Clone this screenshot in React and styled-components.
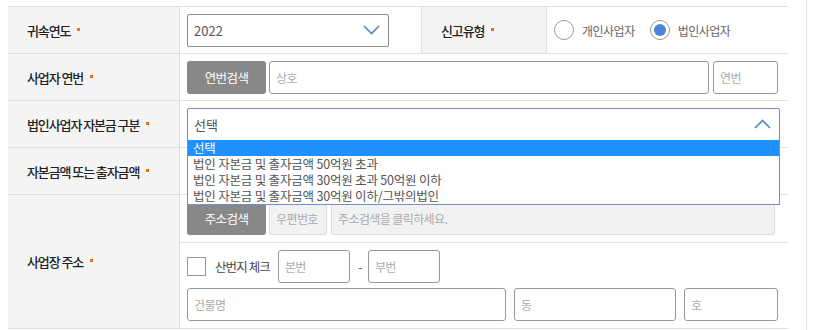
import React from 'react';
import styled, { createGlobalStyle } from 'styled-components';

const GlobalStyle = createGlobalStyle`
  body {
    margin: 0;
    background: #fff;
    font-family: "Noto Sans CJK KR", "Noto Sans", sans-serif;
  }
`;

const Page = styled.div`
  padding: 6px 0 0 8px;
  width: 798px;
  height: 324px;
  border-right: 1px solid #e6e6e6;
`;

const FormTable = styled.div`
  width: 780px;
  border-top: 1px solid #e0e0e0;
`;

const Row = styled.div`
  display: flex;
  min-height: 46px;
  border-bottom: 1px solid #e0e0e0;
`;

const Label = styled.div`
  display: flex;
  align-items: center;
  box-sizing: border-box;
  width: ${(p) => p.width || 172}px;
  flex: none;
  padding-left: 19px;
  background: #f4f4f4;
  border-right: 1px solid #e0e0e0;
  border-left: ${(p) => (p.inner ? '1px solid #e0e0e0' : 'none')};
  font-size: 13px;
  font-weight: 500;
  color: #222;
  letter-spacing: -1.1px;
`;

const Required = styled.span`
  width: 3px;
  height: 3px;
  margin-left: 7px;
  margin-top: -2px;
  background: #f56a13;
`;

const Cell = styled.div`
  display: flex;
  align-items: center;
  gap: ${(p) => p.gap ?? 3}px;
  box-sizing: border-box;
  width: ${(p) => (p.width ? `${p.width}px` : 'auto')};
  flex: ${(p) => (p.width ? 'none' : '1')};
  padding: 0 ${(p) => p.right || 10}px 0 7px;
  position: relative;
`;

const Stack = styled.div`
  display: flex;
  flex-direction: column;
  flex: 1;
`;

const SubRow = styled.div`
  display: flex;
  flex-direction: column;
  gap: 5px;
  padding: 7px 10px 7px 7px;
  border-bottom: ${(p) => (p.last ? 'none' : '1px solid #e0e0e0')};
  min-height: ${(p) => p.h || 0}px;
  box-sizing: border-box;
  justify-content: center;
`;

const Line = styled.div`
  display: flex;
  align-items: center;
  gap: ${(p) => p.gap || 8}px;
`;

const Select = styled.div`
  display: flex;
  align-items: center;
  justify-content: space-between;
  box-sizing: border-box;
  width: ${(p) => (p.width ? `${p.width}px` : '100%')};
  height: 33px;
  padding: 0 8px 0 6px;
  border: 1px solid ${(p) => (p.open ? '#6a92d3' : '#8c8c8c')};
  border-radius: 2px;
  font-size: 13px;
  color: #555;
`;

const Dropdown = styled.ul`
  position: absolute;
  left: 7px;
  right: 8px;
  top: 39px;
  z-index: 2;
  margin: 0;
  padding: 0;
  list-style: none;
  background: #fff;
  border: 1px solid #6a92d3;
  border-top: none;
`;

const Option = styled.li`
  height: 16px;
  line-height: 16px;
  padding-left: 5px;
  font-size: 12.5px;
  letter-spacing: -0.2px;
  color: ${(p) => (p.active ? '#fff' : '#555')};
  background: ${(p) => (p.active ? '#1e90ff' : 'transparent')};
`;

const Button = styled.button`
  flex: none;
  width: 79px;
  height: 33px;
  border: none;
  border-radius: 3px;
  background: #888;
  color: #fff;
  font-family: inherit;
  font-size: 12.5px;
  letter-spacing: -0.6px;
`;

const Input = styled.input`
  box-sizing: border-box;
  height: 33px;
  width: ${(p) => (p.width ? `${p.width}px` : 'auto')};
  flex: ${(p) => (p.width ? 'none' : '1')};
  min-width: 0;
  padding: 0 6px;
  border: 1px solid ${(p) => (p.disabled ? '#dcdcdc' : '#999')};
  border-radius: 3px;
  background: ${(p) => (p.disabled ? '#f2f2f2' : '#fff')};
  font-family: inherit;
  font-size: 12px;
  letter-spacing: -0.6px;
  &::placeholder {
    color: #aaa;
  }
`;

const RadioGroup = styled.label`
  display: flex;
  align-items: center;
  gap: 8px;
  margin-right: 15px;
  font-size: 12px;
  color: #666;
  letter-spacing: -0.5px;
`;

const RadioCircle = styled.span`
  box-sizing: border-box;
  width: 20px;
  height: 20px;
  border-radius: 50%;
  border: 1px solid #999;
  display: flex;
  align-items: center;
  justify-content: center;
  &::after {
    content: '';
    width: 12px;
    height: 12px;
    border-radius: 50%;
    background: ${(p) => (p.checked ? '#4d82d6' : 'transparent')};
  }
`;

const Checkbox = styled.span`
  box-sizing: border-box;
  width: 19px;
  height: 19px;
  margin-right: 1px;
  border: 1px solid #999;
  flex: none;
`;

const CheckText = styled.span`
  font-size: 12.5px;
  color: #444;
  letter-spacing: -0.9px;
`;

const Dash = styled.span`
  width: 2px;
  text-align: center;
  color: #666;
  font-size: 13px;
`;

function Chevron({ up }) {
  return (
    <svg width="17" height="10" viewBox="0 0 17 10">
      <path
        d={up ? 'M1 9 L8.5 1.5 L16 9' : 'M1 1 L8.5 8.5 L16 1'}
        fill="none"
        stroke="#5a86cc"
        strokeWidth="1.7"
      />
    </svg>
  );
}

function FieldLabel({ children, ...rest }) {
  return (
    <Label {...rest}>
      {children}
      <Required />
    </Label>
  );
}

const capitalOptions = [
  '선택',
  '법인 자본금 및 출자금액 50억원 초과',
  '법인 자본금 및 출자금액 30억원 초과 50억원 이하',
  '법인 자본금 및 출자금액 30억원 이하/그밖의법인',
];

export default function App() {
  return (
    <Page>
      <GlobalStyle />
      <FormTable>
        <Row>
          <FieldLabel>귀속연도</FieldLabel>
          <Cell width={241}>
            <Select width={202}>
              2022
              <Chevron />
            </Select>
          </Cell>
          <FieldLabel width={126} inner>신고유형</FieldLabel>
          <Cell gap={0}>
            <RadioGroup>
              <RadioCircle />
              개인사업자
            </RadioGroup>
            <RadioGroup>
              <RadioCircle checked />
              법인사업자
            </RadioGroup>
          </Cell>
        </Row>

        <Row>
          <FieldLabel>사업자 연번</FieldLabel>
          <Cell>
            <Button>연번검색</Button>
            <Input placeholder="상호" />
            <Input width={65} placeholder="연번" style={{ marginLeft: 1 }} />
          </Cell>
        </Row>

        <Row>
          <FieldLabel>법인사업자 자본금 구분</FieldLabel>
          <Cell right={8}>
            <Select open>
              선택
              <Chevron up />
            </Select>
            <Dropdown>
              {capitalOptions.map((opt, i) => (
                <Option key={opt} active={i === 0}>{opt}</Option>
              ))}
            </Dropdown>
          </Cell>
        </Row>

        <Row>
          <FieldLabel>자본금액 또는 출자금액</FieldLabel>
          <Cell />
        </Row>

        <Row>
          <FieldLabel>사업장 주소</FieldLabel>
          <Stack>
            <SubRow h={47}>
              <Line gap={3}>
                <Button>주소검색</Button>
                <Input width={58} disabled placeholder="우편번호" />
                <Input disabled placeholder="주소검색을 클릭하세요." style={{ marginLeft: 1, marginRight: 3 }} />
              </Line>
            </SubRow>
            <SubRow last>
              <Line gap={8}>
                <Checkbox />
                <CheckText>산번지 체크</CheckText>
                <Input width={72} placeholder="본번" />
                <Dash>-</Dash>
                <Input width={72} placeholder="부번" />
              </Line>
              <Line gap={8}>
                <Input placeholder="건물명" />
                <Input width={162} placeholder="동" />
                <Input width={94} placeholder="호" />
              </Line>
            </SubRow>
          </Stack>
        </Row>
      </FormTable>
    </Page>
  );
}
